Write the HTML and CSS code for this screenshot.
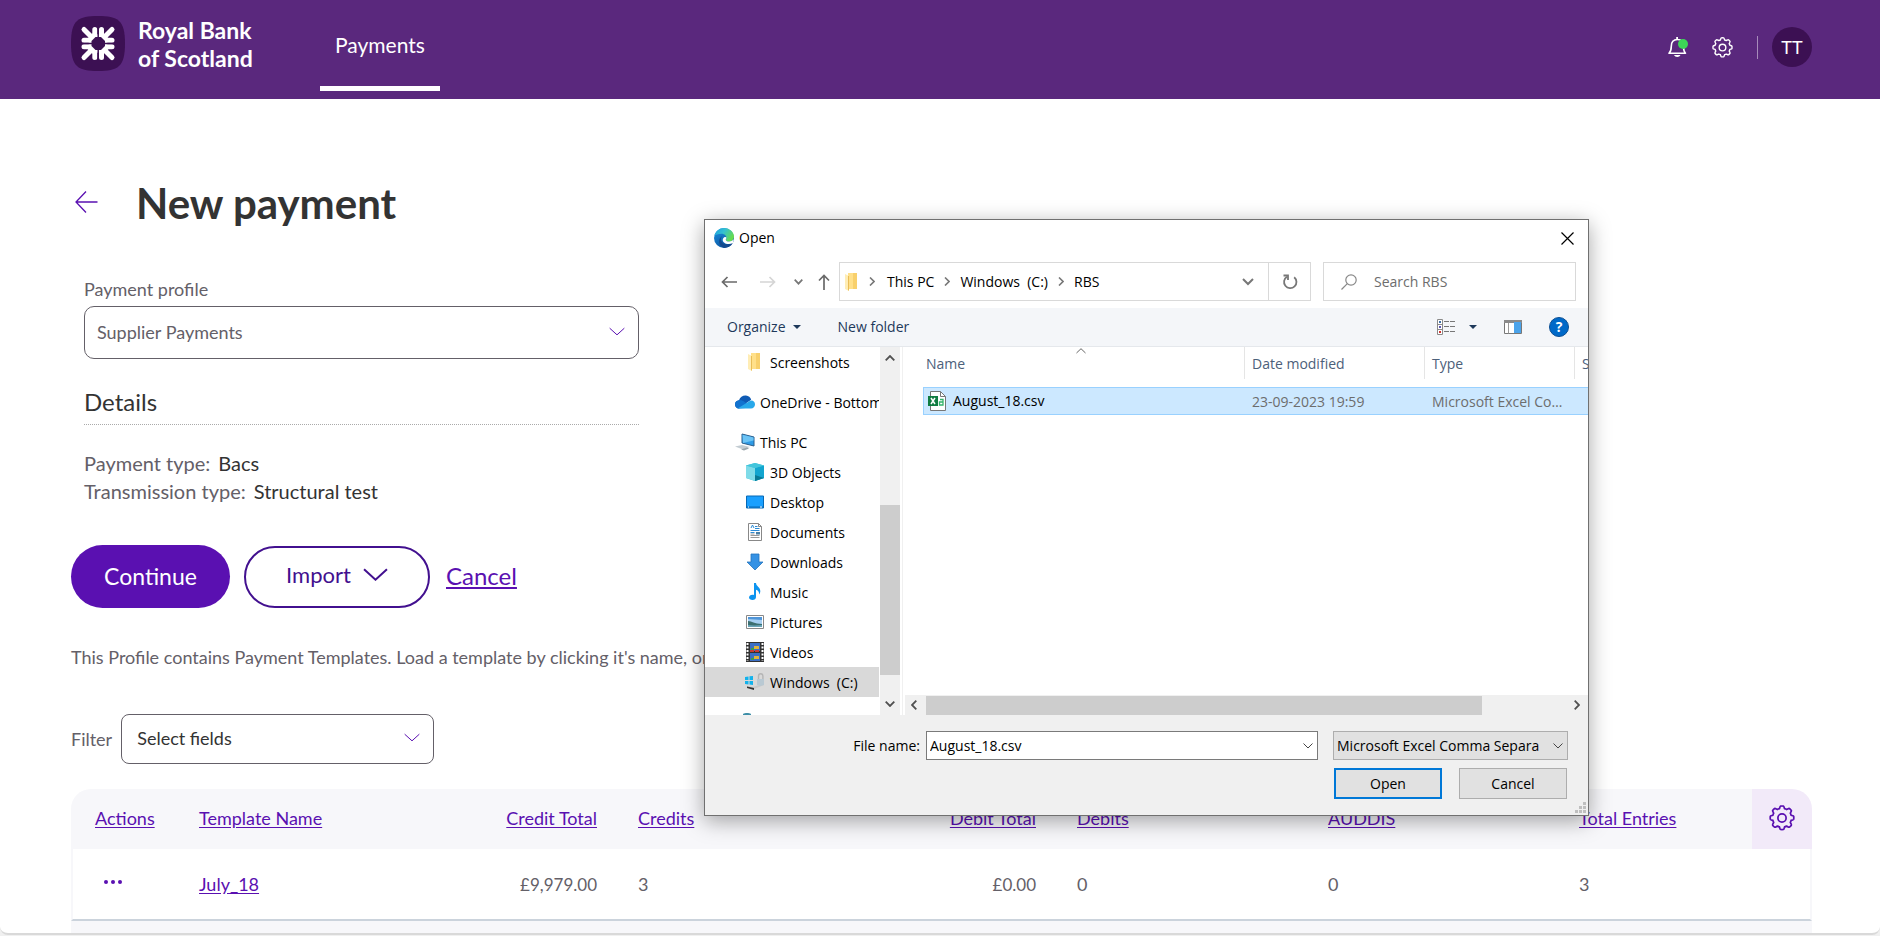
FILE: index.html
```html
<!DOCTYPE html>
<html lang="en">
<head>
    <meta charset="UTF-8">
    <meta name="viewport" content="width=device-width, initial-scale=1.0">
    <title>New payment</title>
    <link rel="stylesheet" href="styles.css">
</head>
<body>
    <!-- shared icons -->
    <svg width="0" height="0" class="sprite" aria-hidden="true">
        <symbol id="chevron" viewBox="0 0 24 12">
            <path d="M1 1l11 10L23 1" fill="none" stroke="currentColor" vector-effect="non-scaling-stroke"/>
        </symbol>
        <symbol id="gear" viewBox="0 0 24 24">
            <path d="M9.6 3.4c.4-1 .5-2.2 1.1-2.4.8-.1 1.8-.1 2.6 0 .6.2.7 1.400 1.100 2.400.7.2 1.300.4 1.900.7 1-.4 1.800-1.200 2.500-.9.7.5 1.300 1.100 1.800 1.800.3.7-.5 1.500-.9 2.500.3.6.5 1.200.7 1.900 1 .4 2.200.5 2.400 1.100.1.8.1 1.800 0 2.600-.2.6-1.400.7-2.400 1.100-.2.7-.4 1.300-.7 1.900.4 1 1.200 1.800.9 2.500-.5.7-1.100 1.300-1.800 1.800-.7.3-1.500-.5-2.500-.9-.6.3-1.200.5-1.900.7-.4 1-.5 2.200-1.100 2.400-.8.1-1.800.1-2.600 0-.6-.2-.7-1.400-1.100-2.400-.7-.2-1.300-.4-1.900-.7-1 .4-1.800 1.200-2.500.9-.7-.5-1.300-1.100-1.800-1.800-.3-.7.5-1.500.9-2.500-.3-.6-.5-1.200-.7-1.900-1-.4-2.200-.5-2.400-1.100-.1-.8-.1-1.800 0-2.600.2-.6 1.400-.7 2.400-1.100.2-.7.4-1.300.7-1.900-.4-1-1.200-1.800-.9-2.500.5-.7 1.100-1.300 1.800-1.800.7-.3 1.500.5 2.500.9.6-.3 1.200-.5 1.900-.7z" fill="none" stroke="currentColor" stroke-width="1.600"/>
            <circle cx="12" cy="12" r="3.800" fill="none" stroke="currentColor" stroke-width="1.600"/>
        </symbol>
        <symbol id="folder" viewBox="0 0 12 18">
            <path d="M3 0h9v16H3z" fill="#ffe08a"/>
            <path d="M8 0h4v16H8z" fill="#f8d06c"/>
            <path d="M0 1l4 2v15l-4-2z" fill="#ffedb5"/>
            <path d="M3 3l1 0v15l-1-1z" fill="#e9bd58"/>
        </symbol>
    </svg>

    <div class="app">
        <header class="topbar">
            <a class="brand" href="#">
                <svg class="brand-mark" viewBox="0 0 54 55">
                    <path d="M27 0c20 0 27 4 27 27.500S47 55 27 55 0 51 0 27.500 7 0 27 0z" fill="#3c1053"/>
                    <g stroke="#fff" stroke-width="5" stroke-linecap="round">
                        <path d="M13 13.500l9 9M41 13.500l-9 9M13 41.500l9-9M41 41.500l-9-9"/>
                        <path d="M23.800 13.500v6.500M30.500 13.500v6.500M23.800 41.500v-6.500M30.500 41.500v-6.500"/>
                        <path d="M13 24.300h6.500M13 30.800h6.500M41 24.300h-6.500M41 30.800h-6.500"/>
                    </g>
                    <path d="M22 17l5.200 1.500 5.300-1.500 5 5.500-1.500 5 1.500 5.500-5 5-5.300-1.500-5.200 1.500-5.500-5 1.500-5.500-1.500-5z" fill="#fff"/>
                    <path d="M27.200 12v10M27.200 43v-10M11.500 27.500h10M43 27.500h-10" stroke="#3c1053" stroke-width="1.500"/>
                    <path d="M24.500 21h5.500l4 4v5l-4 4h-5.500l-4-4v-5z" fill="#3c1053"/>
                </svg>
                <span class="brand-name"><span>Royal Bank</span><span>of Scotland</span></span>
            </a>
            <nav class="tabs">
                <a class="tab" href="#">Payments</a>
            </nav>
            <div class="tools">
                <button class="tool" aria-label="Notifications">
                    <svg width="20" height="20" viewBox="0 0 20 20">
                        <path d="M1 16.200h16.500c-1.700-1.700-2-3-2-7 0-4-2.300-6.700-6.200-6.700S3.300 5.200 3.300 9.200c0 4-.6 5.300-2.300 7z" fill="none" stroke="#fff" stroke-width="1.600" stroke-linejoin="round"/>
                        <path d="M8.200 0h1.800v3H8.200zM6 18h6.500c-.6 1.300-1.700 2-3.200 2S6.600 19.300 6 18z" fill="#fff"/>
                        <circle cx="15" cy="7" r="5" fill="#3dd657"/>
                    </svg>
                </button>
                <button class="tool" aria-label="Settings">
                    <svg width="21" height="21"><use href="#gear"/></svg>
                </button>
                <span class="divider"></span>
                <button class="avatar">TT</button>
            </div>
        </header>

        <main class="page">
            <div class="title-row">
                <a class="back" href="#" aria-label="Back">
                    <svg width="23" height="22" viewBox="0 0 23 22"><path d="M22.500 11H1M11 .5L1 11l10 10.500" fill="none" stroke="#5a10b1" stroke-width="1.300"/></svg>
                </a>
                <h1>New payment</h1>
            </div>

            <section class="profile">
                <label for="profile">Payment profile</label>
                <div class="select-wrap">
                    <select id="profile"><option>Supplier Payments</option></select>
                    <svg class="arrow" width="16" height="9"><use href="#chevron"/></svg>
                </div>
                <h2>Details</h2>
                <dl class="details">
                    <div><dt>Payment type:</dt><dd>Bacs</dd></div>
                    <div><dt>Transmission type:</dt><dd>Structural test</dd></div>
                </dl>
            </section>

            <div class="actions">
                <button class="btn btn-primary">Continue</button>
                <button class="btn btn-outline">Import <svg width="25" height="13"><use href="#chevron"/></svg></button>
                <a class="cancel" href="#">Cancel</a>
            </div>

            <p class="hint">This Profile contains Payment Templates. Load a template by clicking it's name, or</p>

            <div class="filter">
                <label for="fields">Filter</label>
                <div class="select-wrap">
                    <select id="fields"><option>Select fields</option></select>
                    <svg class="arrow" width="16" height="9"><use href="#chevron"/></svg>
                </div>
            </div>

            <table class="templates">
                <colgroup>
                    <col class="c-actions"><col class="c-wide"><col class="c-total"><col class="c-wide"><col class="c-total"><col class="c-wide"><col class="c-wide"><col><col class="c-gear">
                </colgroup>
                <thead>
                    <tr>
                        <th><a href="#">Actions</a></th>
                        <th><a href="#">Template Name</a></th>
                        <th class="num"><a href="#">Credit Total</a></th>
                        <th><a href="#">Credits</a></th>
                        <th class="num"><a href="#">Debit Total</a></th>
                        <th><a href="#">Debits</a></th>
                        <th><a href="#">AUDDIS</a></th>
                        <th><a href="#">Total Entries</a></th>
                        <th class="gear-cell"><button aria-label="Table settings"><svg width="26" height="26"><use href="#gear"/></svg></button></th>
                    </tr>
                </thead>
                <tbody>
                    <tr>
                        <td><button class="more" aria-label="More actions"><i></i><i></i><i></i></button></td>
                        <td><a href="#">July_18</a></td>
                        <td class="num">£9,979.00</td>
                        <td>3</td>
                        <td class="num">£0.00</td>
                        <td>0</td>
                        <td>0</td>
                        <td colspan="2">3</td>
                    </tr>
                    <tr class="next-row"><td colspan="9"></td></tr>
                </tbody>
            </table>
        </main>
    </div>

    <div class="dialog" role="dialog" aria-label="Open">
        <div class="dialog-title">
            <svg width="20" height="20" viewBox="0 0 20 20">
                <defs>
                    <linearGradient id="edgeTop" x1="0" y1="0" x2="1" y2="0.500"><stop offset="0" stop-color="#1b9de2"/><stop offset=".5" stop-color="#35c1d0"/><stop offset="1" stop-color="#66dc4e"/></linearGradient>
                    <linearGradient id="edgeSide" x1="0" y1="0" x2="0.500" y2="1"><stop offset="0" stop-color="#1a8fe0"/><stop offset="1" stop-color="#0c59a4"/></linearGradient>
                </defs>
                <circle cx="10" cy="10" r="10" fill="url(#edgeSide)"/>
                <path d="M.3 8C1.500 3 5.500 0 10 0c6 0 10 4.500 10 8.500 0 3-2.200 5-5 5-2 0-3.500-.8-3.200-1.600.2-.4.700-.8.700-1.900 0-2-2-4.200-5-4.200C4 5.800 1.500 6.800.3 8z" fill="url(#edgeTop)"/>
                <path d="M8.200 8.300c-1.500 1.200-1.700 3.500-.6 5.300 1.400 2.400 5 3.700 8.600 2.500l2.600-1C17 18.500 13.500 20 10.500 20 6.500 19 4.500 15.500 5.300 12c.4-1.700 1.500-3.100 2.900-3.700z" fill="#134a8e"/>
                <path d="M12.500 9.800c-.2 1-.8 1.400-.7 2.100.5 1.500 3.500 2 5.700 1.100l2.200-1.500-.8 3.600c-3.500 1.800-8.400.9-9.800-1.700-.9-1.700-.1-3.600 1.200-4.200 1-.4 2-.1 2.200.6z" fill="#fff"/>
            </svg>
            <span>Open</span>
            <button class="close" aria-label="Close"><svg width="13" height="13" viewBox="0 0 13 13"><path d="M.5.5l12 12M12.500.5l-12 12" stroke="#000" stroke-width="1.200"/></svg></button>
        </div>

        <div class="nav-row">
            <div class="nav-buttons">
                <button aria-label="Back"><svg width="16" height="12" viewBox="0 0 16 12"><path d="M16 6H1.500M6.500 1l-5 5 5 5" fill="none" stroke="#6a6a6a" stroke-width="1.700"/></svg></button>
                <button aria-label="Forward"><svg width="16" height="12" viewBox="0 0 16 12"><path d="M0 6h14.500M9.500 1l5 5-5 5" fill="none" stroke="#d5d5d5" stroke-width="1.700"/></svg></button>
                <button aria-label="Recent locations"><svg width="9" height="6" viewBox="0 0 9 6"><path d="M.7.7l3.800 4 3.800-4" fill="none" stroke="#777" stroke-width="1.700"/></svg></button>
                <button aria-label="Up"><svg width="12" height="16" viewBox="0 0 12 16"><path d="M6 16V1.500M1 6.500l5-5 5 5" fill="none" stroke="#6a6a6a" stroke-width="1.700"/></svg></button>
            </div>
            <div class="address">
                <svg width="12" height="18"><use href="#folder"/></svg>
                <svg class="crumb" width="6" height="9" viewBox="0 0 6 9"><path d="M1 .5l4 4-4 4" fill="none" stroke="#777" stroke-width="1.600"/></svg>
                <a href="#">This PC</a>
                <svg class="crumb" width="6" height="9" viewBox="0 0 6 9"><path d="M1 .5l4 4-4 4" fill="none" stroke="#777" stroke-width="1.600"/></svg>
                <a href="#">Windows&nbsp; (C:)</a>
                <svg class="crumb" width="6" height="9" viewBox="0 0 6 9"><path d="M1 .5l4 4-4 4" fill="none" stroke="#777" stroke-width="1.600"/></svg>
                <a href="#">RBS</a>
                <button class="history" aria-label="Previous locations"><svg width="12" height="8" viewBox="0 0 12 8"><path d="M1 1l5 5 5-5" fill="none" stroke="#777" stroke-width="2"/></svg></button>
                <button class="refresh" aria-label="Refresh"><svg width="16" height="16" viewBox="0 0 16 16"><path d="M12.200 3.200A6.200 6.200 0 1 1 5 2.700" fill="none" stroke="#777" stroke-width="1.800"/><path d="M1.500 1.500H6v4.500" fill="none" stroke="#777" stroke-width="1.800"/></svg></button>
            </div>
            <div class="search">
                <svg width="16" height="16" viewBox="0 0 16 16"><circle cx="10" cy="6" r="5.200" fill="none" stroke="#888" stroke-width="1.200"/><path d="M6.300 9.700L.5 15.500" stroke="#888" stroke-width="1.200"/></svg>
                <input type="text" placeholder="Search RBS" aria-label="Search RBS">
            </div>
        </div>

        <div class="toolbar">
            <button>Organize <span class="caret"></span></button>
            <button>New folder</button>
            <div class="toolbar-right">
                <button class="view" aria-label="Change view">
                    <svg width="19" height="16" viewBox="0 0 19 16">
                        <path d="M.5.5h5v15h-5zM.5 5.500h5M.5 10.500h5" fill="#fff" stroke="#8a8a8a"/>
                        <path d="M2 2h2v2H2z" fill="#3b6ea5"/><path d="M2 7h2v2H2z" fill="#5b55b5"/><path d="M2 12h2v2H2z" fill="#d0312d"/>
                        <path d="M7 2.500h5M13 2.500h5M7 7.500h5M13 7.500h5M7 12.500h5M13 12.500h5" stroke="#777"/>
                    </svg>
                    <span class="caret"></span>
                </button>
                <button class="preview" aria-label="Preview pane">
                    <svg width="18" height="14" viewBox="0 0 18 14">
                        <path d="M.5.5h17v13H.5z" fill="#fff" stroke="#777"/><path d="M0 0h18v3H0z" fill="#8a8a8a"/>
                        <path d="M4.500 3v10.500" stroke="#999"/><path d="M10 2h7v11h-7z" fill="#4ba3ea"/>
                    </svg>
                </button>
                <button class="help" aria-label="Help">?</button>
            </div>
        </div>

        <div class="browser">
            <nav class="tree">
                <ul>
                    <li class="sub last-sub"><svg width="18" height="18" viewBox="-2 0 18 18"><use href="#folder" x="0" width="12" height="18"/></svg><a href="#">Screenshots</a></li>
                    <li class="root spaced"><svg width="20" height="14" viewBox="0 0 20 14"><path d="M4 13.500C1.500 13.500 0 11.500 0 9.500c0-2.300 1.700-4 4-4.200C5 2 8 .2 11 .5c2.500.3 4.500 1.900 5.200 4.200L10 9z" fill="#0f5bb5"/><path d="M4 5.300c2-.5 3.500.2 5 1.200l8 6L4 13.500C1.500 13.500 0 11.500 0 9.500c0-2.300 1.700-4 4-4.200z" fill="#1273cf"/><path d="M3 13.300l10.500-6.500c1-.8 2-1.200 3-1.200 2 0 3.500 1.700 3.500 3.900 0 2.300-1.700 4-4 4H4z" fill="#28a8ea"/></svg><a href="#">OneDrive - Bottomline</a></li>
                    <li class="root"><svg width="20" height="18" viewBox="0 0 20 18"><path d="M7 1l12 3v9L7 10z" fill="#2f9be6" stroke="#2a5e8c"/><path d="M7.500 1.700l11 2.700v3L8 10z" fill="#6cc4f5"/><path d="M0 13.500l7-1.500 8 2-7 2.500z" fill="#c3ccd2"/><path d="M6 16.500l6-2 2 1-5 2z" fill="#9aa5ac"/></svg><a href="#">This PC</a></li>
                    <li class="sub"><svg width="18" height="18" viewBox="0 0 18 18"><path d="M9 0l9 2.500v12.500L9 18l-9-3V2.500z" fill="#3cc1da"/><path d="M0 2.500L9 5v13l-9-3z" fill="#7fdbe8"/><path d="M18 2.500L9 5v13l9-3z" fill="#12a5cf"/><path d="M9 12l9 3-9 3z" fill="#087a95"/><path d="M9 0l9 2.500L9 5 0 2.500z" fill="#42c5dc"/></svg><a href="#">3D Objects</a></li>
                    <li class="sub"><svg width="18" height="18" viewBox="0 0 18 18"><path d="M.5 3h17v12H.5z" fill="#1aa0ff" stroke="#0769b5"/><path d="M1 14h16" stroke="#0769b5"/><path d="M2 14h1M14 14h2" stroke="#fff"/></svg><a href="#">Desktop</a></li>
                    <li class="sub"><svg width="18" height="18" viewBox="0 0 18 18"><path d="M2.500.5h10l3 3v14h-13z" fill="#fff" stroke="#888"/><path d="M12.500.5v3h3" fill="none" stroke="#888"/><path d="M5 5l1.500-3L8 5M9 3.500h2.500M9 5.500h4.500M4.500 7.500h9M4.500 9.500h4" fill="none" stroke="#2b8bd6"/><path d="M4.500 12.500h9M4.500 14.500h9M4.500 11h4" stroke="#999"/><path d="M10 9h4v2.500h-4z" fill="#4a7fa5"/></svg><a href="#">Documents</a></li>
                    <li class="sub"><svg width="18" height="18" viewBox="0 0 18 18"><path d="M5 1h8v8h4l-8 8-8-8h4z" fill="#3592e4" stroke="#2474bd" stroke-width=".8"/></svg><a href="#">Downloads</a></li>
                    <li class="sub"><svg width="18" height="18" viewBox="0 0 18 18"><path d="M8 0h2c.2 3.500 4.500 4 4.300 8.500 0 1-.4 2-1.200 3 .2-3-1.300-4.500-3.100-4.800V14c0 1.800-1.500 3-3.500 3S3 16 3 14.500s1.500-2.800 3.500-2.800c.6 0 1.100.1 1.500.3z" fill="#0c94f0"/></svg><a href="#">Music</a></li>
                    <li class="sub"><svg width="18" height="18" viewBox="0 0 18 18"><path d="M.5 2.500h17v13H.5z" fill="#fff" stroke="#888"/><path d="M2 4h14v10H2z" fill="#a6cff2"/><path d="M2 4h14v3L2 6z" fill="#4f95d8"/><path d="M2 8c4 0 6 3 14 3v3H2z" fill="#3c6f70"/><path d="M2 12c4 .5 9 .5 14 0v2H2z" fill="#6aa5b8"/></svg><a href="#">Pictures</a></li>
                    <li class="sub"><svg width="18" height="20" viewBox="0 0 18 20"><path d="M0 0h18v20H0z" fill="#333"/><path d="M1.500 1v18M16.500 1v18" stroke="#fff" stroke-width="2" stroke-dasharray="2 1.500"/><path d="M4 1h10v8H4zM4 11h10v8H4z" fill="#3c6fc4"/><path d="M8 4h5v3H8zM8 14h5v3H8z" fill="#e0b43a"/><path d="M4 8h4v2H4zM9 8h4v2H9z" fill="#c93a34"/><path d="M5 6h3v2H5zM5 16h3v2H5z" fill="#3f9a4d"/></svg><a href="#">Videos</a></li>
                    <li class="sub drive selected"><svg width="20" height="18" viewBox="0 0 20 18"><path d="M0 4l3.500-.5V7H0zM4.500 3.300L8 3v4H4.500zM0 8h3.500v3.500L0 11zM4.500 8H8v4l-3.500-.4z" fill="#12b2ec"/><path d="M2 13l6 1 9-3 2 1-10 4-7-2z" fill="#c9c9c9"/><path d="M2 13.500l7 1.500v2l-7-2z" fill="#333"/><path d="M13.500 6V3a2.200 2.200 0 0 1 4.400 0v3" fill="none" stroke="#b5b5b5" stroke-width="1.400"/><path d="M12 6h7v6l-4 1-3-1z" fill="#b9c9d3"/></svg><a href="#">Windows&nbsp; (C:)</a></li>
                    <li class="root"><svg width="20" height="18" viewBox="0 0 20 18"><path d="M8 11c2-1.300 6-1.300 8 0v4H8z" fill="#3e8fa8"/></svg></li>
                </ul>
            </nav>
            <div class="vscroll">
                <svg width="10" height="6" viewBox="0 0 10 6"><path d="M.7 5.300L5 1l4.300 4.300" fill="none" stroke="#505050" stroke-width="1.800"/></svg>
                <div class="vthumb"></div>
                <svg width="10" height="6" viewBox="0 0 10 6"><path d="M.7.7L5 5 9.300.7" fill="none" stroke="#505050" stroke-width="1.800"/></svg>
            </div>
            <div class="files">
                <div class="file-scroll">
                    <table class="file-table">
                        <colgroup><col class="f-name"><col class="f-date"><col class="f-type"><col class="f-size"></colgroup>
                        <thead>
                            <tr><th><span>Name</span></th><th><span>Date modified</span></th><th><span>Type</span></th><th><span>Size</span></th></tr>
                        </thead>
                        <tbody>
                            <tr>
                                <td>
                                    <div class="file-name">
                                        <svg width="18" height="20" viewBox="0 0 18 20">
                                            <path d="M2.500.5h10l5 5v14h-15z" fill="#fff" stroke="#777"/><path d="M12.500.5v5h5" fill="none" stroke="#777"/>
                                            <path d="M0 5h10v10H0z" fill="#107c41"/><path d="M3 7l4 6M7 7l-4 6" stroke="#fff" stroke-width="1.500"/>
                                            <path d="M12 8.500h3v5.500h-3.500v-3H15" fill="none" stroke="#33b36b" stroke-width="1.300"/>
                                        </svg>
                                        August_18.csv
                                    </div>
                                </td>
                                <td>23-09-2023 19:59</td>
                                <td>Microsoft Excel Comma</td>
                                <td></td>
                            </tr>
                        </tbody>
                    </table>
                    <svg class="sort" width="10" height="6" viewBox="0 0 10 6"><path d="M.5 5L5 .7 9.500 5" fill="none" stroke="#666"/></svg>
                </div>
                <div class="hscroll">
                    <svg width="6" height="10" viewBox="0 0 6 10"><path d="M5.300.7L1 5l4.300 4.300" fill="none" stroke="#505050" stroke-width="1.800"/></svg>
                    <div class="track"><div class="hthumb"></div></div>
                    <svg width="6" height="10" viewBox="0 0 6 10"><path d="M.7.700L5 5 .7 9.300" fill="none" stroke="#505050" stroke-width="1.800"/></svg>
                </div>
            </div>
        </div>

        <div class="dialog-footer">
            <label for="filename">File name:</label>
            <div class="combo">
                <input type="text" id="filename" value="August_18.csv">
                <svg width="10" height="6" viewBox="0 0 10 6"><path d="M.5.5L5 5 9.500.5" fill="none" stroke="#444"/></svg>
            </div>
            <div class="combo filetype">
                <select aria-label="File type"><option>Microsoft Excel Comma Separa</option></select>
                <svg width="10" height="6" viewBox="0 0 10 6"><path d="M.5.5L5 5 9.500.5" fill="none" stroke="#444"/></svg>
            </div>
            <div class="dialog-buttons">
                <button class="default">Open</button>
                <button>Cancel</button>
            </div>
        </div>
        <svg class="grip" width="11" height="11" viewBox="0 0 11 11"><path d="M8 0h3v3H8zM4 4h3v3H4zM8 4h3v3H8zM0 8h3v3H0zM4 8h3v3H4zM8 8h3v3H8z" fill="#bfbfbf"/></svg>
    </div>
</body>
</html>
```

FILE: styles.css
```css
* {
    box-sizing: border-box;
}
body {
    margin: 0;
    height: 100vh;
    overflow: hidden;
    background: #f0f0f0;
    font-family: Lato, "Open Sans", sans-serif;
    font-size: 18px;
    color: #646068;
}
button, input, select {
    font: inherit;
    color: inherit;
    background: none;
    border: 0;
    padding: 0;
    margin: 0;
}
button {
    cursor: pointer;
}
svg {
    flex: none;
    display: block;
}
.sprite {
    position: absolute;
}
.app {
    height: calc(100vh - 1px);
    overflow: hidden;
    background: #fff;
    border-bottom: 2px solid #d9d9d9;
    border-radius: 0 0 8px 8px;
}

/* header */
.topbar {
    display: flex;
    align-items: flex-start;
    height: 99px;
    padding: 0 68px 0 71px;
    background: #5a287d;
    color: #fff;
}
.brand {
    display: flex;
    gap: 13px;
    min-width: 184px;
    margin-top: 16px;
    color: #fff;
    text-decoration: none;
}
.brand-mark {
    width: 54px;
    height: 55px;
}
.brand-name {
    font-size: 23px;
    font-weight: bold;
    line-height: 28px;
    white-space: nowrap;
}
.brand-name span {
    display: block;
}
.tabs {
    margin-left: 65px;
}
.tab {
    display: block;
    height: 91px;
    padding: 33px 15px 0;
    border-bottom: 5px solid #fff;
    color: #fff;
    font-size: 21px;
    line-height: 24px;
    text-decoration: none;
}
.tools {
    display: flex;
    align-items: center;
    gap: 24px;
    margin-top: 27px;
    margin-left: auto;
}
.divider {
    width: 1px;
    height: 23px;
    background: #a78bbb;
}
.avatar {
    width: 40px;
    height: 40px;
    margin-left: -10px;
    border-radius: 50%;
    background: #3c1053;
    font-size: 18px;
}

/* page */
.page {
    padding: 0 68px 0 71px;
}
.title-row {
    display: flex;
    align-items: center;
    gap: 38px;
    padding: 80px 0 0 4px;
}
h1 {
    margin: 0;
    font-size: 42px;
    line-height: 48px;
    color: #333;
}
.back {
    padding-bottom: 3px;
}
.profile {
    width: 555px;
    margin: 50px 0 0 13px;
}
.profile label {
    display: block;
    line-height: 24px;
}
.select-wrap {
    position: relative;
    color: #5a10b1;
}
.select-wrap select {
    display: block;
    width: 100%;
    height: 53px;
    padding: 0 12px 2px;
    appearance: none;
    border: 1px solid #646068;
    border-radius: 10px;
    background: #fff;
    color: #646068;
}
.select-wrap .arrow {
    position: absolute;
    right: 14px;
    top: 50%;
    margin-top: -6px;
    pointer-events: none;
}
.profile .select-wrap {
    margin-top: 5px;
}
h2 {
    margin: 27px 0 0;
    padding-bottom: 6px;
    border-bottom: 1px dotted #aaa;
    font-size: 24px;
    font-weight: normal;
    line-height: 32px;
    color: #333;
}
.details {
    margin: 24px 0 0;
    font-size: 20px;
    line-height: 28px;
}
.details div {
    display: flex;
    gap: 8px;
}
.details dd {
    margin: 0;
    color: #333;
}
.actions {
    display: flex;
    align-items: center;
    gap: 14px;
    margin-top: 40px;
}
.btn {
    height: 63px;
    padding-bottom: 2px;
    border-radius: 32px;
    font-size: 23px;
}
.btn-primary {
    width: 159px;
    background: #5a10b1;
    color: #fff;
}
.btn-outline {
    display: flex;
    align-items: center;
    justify-content: center;
    gap: 12px;
    width: 186px;
    height: 62px;
    padding-bottom: 4px;
    border: 2px solid #42108f;
    color: #42108f;
    font-size: 22px;
    stroke-width: 2px;
}
.cancel {
    margin-left: 2px;
    padding-bottom: 2px;
    font-size: 24px;
    color: #5a10b1;
}
.hint {
    margin: 37px 0 0;
    line-height: 24px;
    white-space: nowrap;
}
.filter {
    display: flex;
    align-items: center;
    gap: 9px;
    margin-top: 45px;
}
.filter .select-wrap {
    width: 313px;
}
.filter select {
    height: 50px;
    padding: 0 15px 3px;
    border-radius: 8px;
    color: #333;
}

/* templates table */
.templates {
    width: 100%;
    margin-top: 25px;
    table-layout: fixed;
    border-collapse: separate;
    border-spacing: 0;
}
.c-actions {
    width: 108px;
}
.c-wide {
    width: 251px;
}
.c-total {
    width: 188px;
}
.c-gear {
    width: 60px;
}
.templates th {
    height: 60px;
    padding: 0 20px 3px;
    background: #f7f7fa;
    font-weight: normal;
    text-align: left;
}
.templates th:first-child {
    padding-left: 24px;
    border-radius: 20px 0 0 0;
}
.templates a {
    color: #5a10b1;
    text-underline-offset: 2px;
}
.templates td {
    height: 72px;
    padding: 0 20px;
    border-bottom: 2px solid #cbd3dc;
}
.templates td:first-child {
    border-left: 2px solid #f7f7fa;
}
.templates td:last-child {
    border-right: 2px solid #f7f7fa;
}
.templates .num {
    padding-right: 21px;
    text-align: right;
}
.templates td.num {
    font-size: 17px;
}
.templates .gear-cell {
    padding: 2px 17px 0;
    border-radius: 0 20px 0 0;
    background: #f2eaf9;
    color: #5a10b1;
}
.more {
    display: flex;
    gap: 3px;
    padding: 6px 11px 10px;
}
.more i {
    width: 4px;
    height: 4px;
    border-radius: 50%;
    background: #5a10b1;
}
.templates .next-row td {
    background: #f7f7fa;
}

/* file dialog */
.dialog {
    position: absolute;
    left: 704px;
    top: 219px;
    width: 885px;
    display: flex;
    flex-direction: column;
    border: 1px solid #707070;
    background: #fff;
    box-shadow: 0 5px 20px rgba(0, 0, 0, 0.35);
    font-family: "Open Sans", sans-serif;
    font-size: 14px;
    line-height: 20px;
    color: #000;
}
.dialog a {
    color: inherit;
    text-decoration: none;
    white-space: nowrap;
}
.dialog-title {
    display: flex;
    align-items: center;
    gap: 5px;
    height: 36px;
    padding: 0 14px 0 9px;
}
.close {
    margin-left: auto;
}
.nav-row {
    display: flex;
    align-items: center;
    gap: 12px;
    height: 52px;
    padding: 0 12px 1px 16px;
}
.nav-buttons {
    display: flex;
    align-items: center;
    gap: 18px;
    width: 106px;
}
.nav-buttons button:first-child {
    margin-right: 5px;
}
.nav-buttons button:last-child {
    margin-left: -3px;
}
.address {
    display: flex;
    align-items: center;
    flex: 1;
    height: 39px;
    padding-left: 5px;
    border: 1px solid #d9d9d9;
}
.crumb {
    margin: 0 12px;
}
.address a + .crumb {
    margin: 0 10px;
}
.history {
    margin: 0 14px 0 auto;
}
.refresh {
    display: flex;
    align-items: center;
    justify-content: center;
    width: 42px;
    height: 37px;
    border-left: 1px solid #d9d9d9;
}
.search {
    display: flex;
    align-items: center;
    gap: 17px;
    width: 253px;
    height: 39px;
    padding-left: 17px;
    border: 1px solid #d9d9d9;
}
.search input {
    flex: 1;
    min-width: 0;
    outline: 0;
}
.search input::placeholder {
    color: #6d6d6d;
}
.toolbar {
    display: flex;
    align-items: center;
    gap: 37px;
    height: 39px;
    padding: 0 19px 0 22px;
    border-bottom: 1px solid #e5e8ec;
    background: #f4f6f9;
    color: #1e395b;
}
.toolbar button {
    display: flex;
    align-items: center;
    gap: 7px;
}
.caret {
    border: 4px solid transparent;
    border-top-color: #1e395b;
    border-bottom: 0;
}
.toolbar-right {
    display: flex;
    align-items: center;
    gap: 27px;
    margin-left: auto;
}
.toolbar .view {
    gap: 13px;
}
.toolbar .help {
    justify-content: center;
    width: 20px;
    height: 20px;
    border: 1px solid #0b4f94;
    border-radius: 50%;
    background: #0069c8;
    color: #fff;
    font-weight: bold;
}
.browser {
    display: flex;
    height: 368px;
}
.tree {
    width: 175px;
    overflow: hidden;
}
.tree ul {
    margin: 0;
    padding: 0;
    list-style: none;
}
.tree li {
    display: flex;
    align-items: center;
    height: 30px;
    margin-right: 1px;
    overflow: hidden;
}
.tree a {
    padding-top: 2px;
}
.tree .root {
    gap: 5px;
    padding-left: 30px;
}
.tree .sub {
    gap: 6px;
    padding-left: 41px;
}
.tree .drive {
    gap: 5px;
    padding-left: 40px;
}
.tree .last-sub, .tree .spaced {
    margin-bottom: 10px;
}
.tree .selected {
    background: #d9d9d9;
}
.vscroll {
    display: flex;
    flex-direction: column;
    align-items: center;
    width: 20px;
    padding: 8px 0;
    background: #f0f0f0;
}
.vthumb {
    width: 20px;
    height: 170px;
    margin: auto 0 26px;
    background: #cdcdcd;
}
.files {
    display: flex;
    flex-direction: column;
    flex: 1;
    min-width: 0;
    margin-left: 2px;
    border-left: 1px solid #f0f0f0;
}
.file-scroll {
    position: relative;
    flex: 1;
    overflow: hidden;
}
.file-table {
    width: 760px;
    margin-left: 20px;
    table-layout: fixed;
    border-collapse: separate;
    border-spacing: 0;
}
.f-name {
    width: 322px;
}
.f-date {
    width: 180px;
}
.f-type {
    width: 150px;
}
.file-table th {
    padding: 0 0 8px;
    font-weight: normal;
    text-align: left;
    color: #4c607a;
}
.file-table th span {
    display: block;
    height: 32px;
    padding-left: 7px;
    border-right: 1px solid #e5e5e5;
    line-height: 33px;
}
.file-table th:first-child span {
    padding-left: 3px;
}
.file-table td {
    height: 28px;
    padding: 1px 8px 0 7px;
    overflow: hidden;
    border: solid #99d1ff;
    border-width: 1px 0;
    background: #cce8ff;
    color: #6d6d6d;
    text-overflow: ellipsis;
    white-space: nowrap;
}
.file-table td:first-child {
    padding: 0 4px;
    border-left-width: 1px;
    color: #000;
}
.file-name {
    display: flex;
    align-items: center;
    gap: 7px;
}
.sort {
    position: absolute;
    left: 173px;
    top: 1px;
}
.hscroll {
    display: flex;
    align-items: center;
    gap: 9px;
    height: 20px;
    margin-left: 2px;
    padding: 0 8px 0 6px;
    background: #f0f0f0;
}
.track {
    flex: 1;
}
.hthumb {
    width: 87%;
    height: 19px;
    background: #cdcdcd;
}
.dialog-footer {
    display: grid;
    grid-template-columns: 221px 1fr 235px;
    align-items: center;
    align-content: start;
    row-gap: 8px;
    height: 100px;
    padding: 16px 20px 0 0;
    background: #f0f0f0;
}
.dialog-footer label {
    padding-right: 6px;
    text-align: right;
}
.combo {
    position: relative;
    margin-right: 15px;
}
.combo input, .combo select {
    display: block;
    width: 100%;
    height: 29px;
    padding: 0 3px;
    appearance: none;
    border: 1px solid #7a7a7a;
    background: #fff;
}
.combo svg {
    position: absolute;
    right: 5px;
    top: 12px;
    pointer-events: none;
}
.combo.filetype {
    margin-right: 0;
}
.combo.filetype select {
    border-color: #adadad;
    background: #e1e1e1;
}
.dialog-buttons {
    display: flex;
    justify-content: space-between;
    grid-column: 3;
    padding: 0 1px;
}
.dialog-buttons button {
    width: 108px;
    height: 31px;
    border: 1px solid #adadad;
    background: #e1e1e1;
}
.dialog-buttons .default {
    border: 2px solid #0078d7;
}
.grip {
    position: absolute;
    right: 2px;
    bottom: 2px;
}
```
